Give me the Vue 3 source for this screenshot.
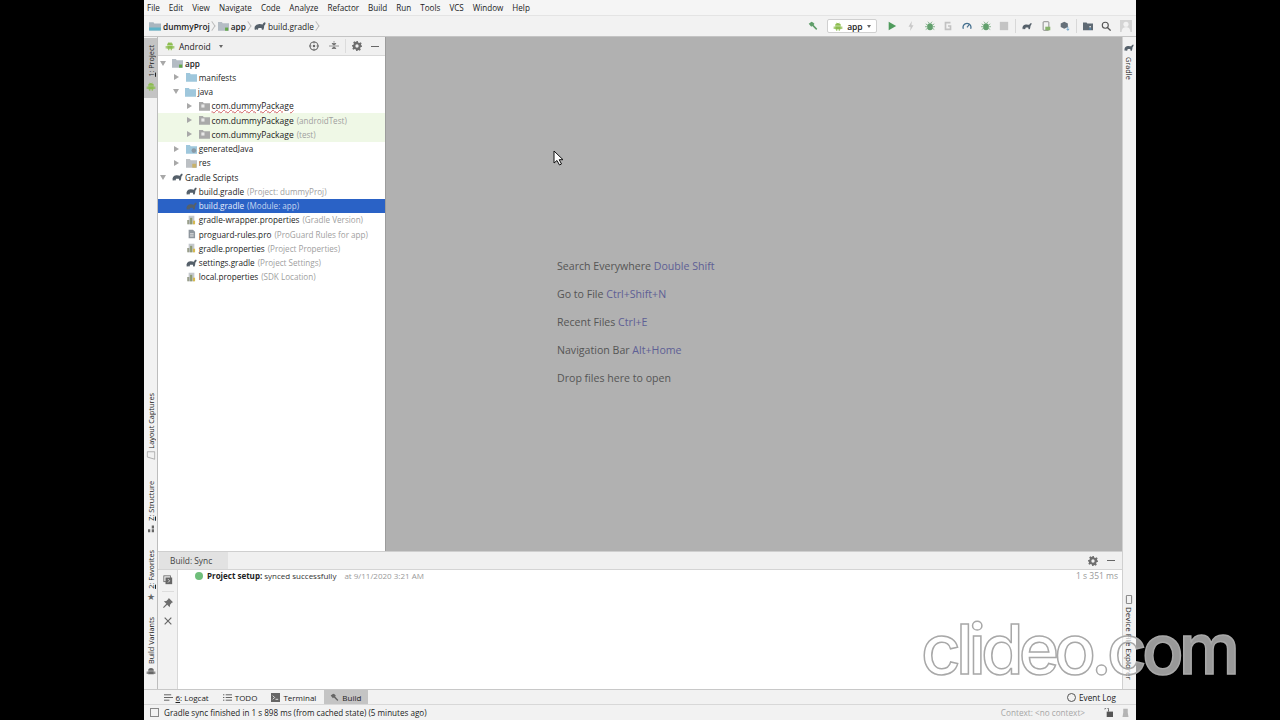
<template>
  <div class="stage">
    <svg class="sprite" width="0" height="0">
      <symbol id="folder" viewBox="0 0 14 12"><path d="M0 1h5l1 1.500h8V12H0z" fill="#9fc7dc"/></symbol>
      <symbol id="pkg" viewBox="0 0 14 12"><path d="M0 1h5l1 1.500h8V12H0z" fill="#a9a9a9"/><rect x="3" y="4" width="4" height="4" fill="#e8e8e8"/></symbol>
      <symbol id="module" viewBox="0 0 14 12"><path d="M0 1h5l1 1.500h8V12H0z" fill="#b4bcc4"/><rect x="9" y="8" width="4" height="4" fill="#62a848"/></symbol>
      <symbol id="root" viewBox="0 0 16 12"><path d="M0 1h6l1 1.500h9V12H0z" fill="#a9b6bf"/><rect x="0" y="8" width="16" height="4" fill="#5fb4c9"/></symbol>
      <symbol id="gen" viewBox="0 0 14 12"><path d="M0 1h5l1 1.500h8V12H0z" fill="#9fc7dc"/><circle cx="10" cy="8" r="3" fill="#8a9aa6"/></symbol>
      <symbol id="res" viewBox="0 0 14 12"><path d="M0 1h5l1 1.500h8V12H0z" fill="#bcc0c4"/><rect x="8" y="7" width="5" height="5" fill="#c8b26a"/></symbol>
      <symbol id="gradle" viewBox="0 0 16 12"><path d="M1 11c-1-4 1-7 5-7.500 2.500-.3 4 .3 5.500.5.500-1.500 1.500-2.500 3-3l1 1c-.5 2-1 3-2 3.500.2 2-.5 4-1 5.500h-2l-.5-2.500H6L5 11H3.500L3 9.500 2.600 11z" fill="#55606a"/></symbol>
      <symbol id="props" viewBox="0 0 14 14"><path d="M3 1h8v12H3z" fill="#c4c8cc"/><rect x="1" y="7" width="3" height="6" fill="#9a9f8c"/><rect x="5" y="4" width="3" height="9" fill="#8e9a72"/><rect x="9" y="8" width="3" height="5" fill="#d5b94e"/></symbol>
      <symbol id="pro" viewBox="0 0 14 14"><path d="M3 1h6l3 3v9H3z" fill="#8f979e"/><rect x="5" y="6" width="5" height="1.500" fill="#e4e4e4"/><rect x="5" y="9" width="5" height="1.500" fill="#e4e4e4"/></symbol>
      <symbol id="android" viewBox="0 0 14 12"><path d="M3 5a4 4 0 0 1 8 0zM3 5.800h8V10H3zM1 6h1.400v3.500H1zM11.600 6H13v3.500h-1.400zM4.500 10H6v2H4.500zM8 10h1.500v2H8zM4.500 1 5 .5 6 2l-.5.500zM9.500 1 9 .5 8 2l.5.500z" fill="#8cbd4f"/></symbol>
      <symbol id="gear" viewBox="0 0 12 12"><path d="M5 0h2l.4 1.700 1.400.6L10.200 1.400l1.400 1.400-.9 1.400.6 1.400L12 5v2l-1.700.4-.6 1.400.9 1.400-1.400 1.400-1.400-.9-1.400.6L7 12H5l-.4-1.700-1.400-.6-1.400.9L.4 9.200l.9-1.400-.6-1.400L0 7V5l1.700-.4.600-1.400-.9-1.400L2.800.4l1.400.9 1.400-.6zM6 4a2 2 0 1 0 0 4 2 2 0 0 0 0-4z" fill="#6e6e6e" fill-rule="evenodd"/></symbol>
      <symbol id="hammer" viewBox="0 0 14 14"><path d="M1 4l4-3 2 1 2 2-1 1.500L13 11l-1.500 1.500L6 7 4.500 8z" fill="currentColor"/></symbol>
      <symbol id="bug" viewBox="0 0 14 14"><ellipse cx="7" cy="8" rx="4" ry="5" fill="currentColor"/><path d="M1 4l3 2M13 4l-3 2M0 8h3M14 8h-3M1 12l3-2M13 12l-3-2M4 1l2 2M10 1L8 3" stroke="currentColor" fill="none"/></symbol>
    </svg>

    <div class="ide">
      <div class="menubar">
        <span v-for="m in menus" :key="m" class="menu-item">{{ m }}</span>
      </div>

      <div class="navbar">
        <div class="crumbs">
          <svg class="ic16"><use href="#root" /></svg><b>dummyProj</b><i class="chev"></i>
          <svg class="ic14"><use href="#module" /></svg><b>app</b><i class="chev"></i>
          <svg class="ic16"><use href="#gradle" /></svg><span>build.gradle</span><i class="chev"></i>
        </div>
        <div class="toolbar">
          <svg class="tb hammer" viewBox="0 0 14 14"><use href="#hammer" /></svg>
          <div class="run-config">
            <svg class="ic10"><use href="#android" /></svg>
            <b>app</b>
            <span class="caret"></span>
          </div>
          <svg class="tb" viewBox="0 0 12 12"><path d="M2 1l9 5-9 5z" fill="#4f9b5c"/></svg>
          <svg class="tb" viewBox="0 0 12 12"><path d="M7 0L3 7h2.500L5 12l4-7H6.500z" fill="#c8c8c8"/></svg>
          <svg class="tb bug" viewBox="0 0 14 14"><use href="#bug" /></svg>
          <svg class="tb" viewBox="0 0 12 12"><path d="M9 2H3v8h6V6H6" stroke="#c2c2c2" stroke-width="2" fill="none"/></svg>
          <svg class="tb" viewBox="0 0 14 14"><path d="M2 11a5.500 5.500 0 1 1 10 0" stroke="#45708f" stroke-width="1.800" fill="none"/><path d="M7 9l3-4" stroke="#45708f" stroke-width="1.500"/></svg>
          <svg class="tb bug" viewBox="0 0 14 14"><use href="#bug" /></svg>
          <svg class="tb" viewBox="0 0 12 12"><rect x="1" y="1" width="10" height="10" fill="#c4c4c4"/></svg>
          <i class="tb-sep"></i>
          <svg class="tb" viewBox="0 0 16 12"><use href="#gradle" /></svg>
          <svg class="tb" viewBox="0 0 14 14"><rect x="3" y="1" width="8" height="12" rx="1" stroke="#666" fill="none"/><rect x="6" y="8" width="7" height="5" fill="#86b36a"/></svg>
          <svg class="tb" viewBox="0 0 14 14"><path d="M6 1l5 2.500v5L6 11 1 8.500v-5z" fill="#66707a"/><path d="M11 8v5M9 11l2 2 2-2" stroke="#4a8fc0" fill="none"/></svg>
          <i class="tb-sep"></i>
          <svg class="tb" viewBox="0 0 14 12"><path d="M0 1h5l1 1.500h8V12H0z" fill="#5f6a74"/><rect x="9" y="6" width="2" height="2" fill="#e8e8e8"/><rect x="9" y="9" width="2" height="2" fill="#4a8fc0"/></svg>
          <svg class="tb" viewBox="0 0 14 14"><circle cx="6" cy="6" r="4.200" stroke="#555" stroke-width="1.600" fill="none"/><path d="M9 9l4.500 4.500" stroke="#555" stroke-width="1.800"/></svg>
          <svg class="tb user" viewBox="0 0 14 14"><rect width="14" height="14" fill="#d4d4d4"/><circle cx="7" cy="5" r="3" fill="#f2f2f2"/><path d="M2 14c0-4 2-5.500 5-5.500s5 1.500 5 5.500z" fill="#f2f2f2"/></svg>
        </div>
      </div>

      <div class="body">
        <div class="strip left">
          <div class="side-tab active">
            <span class="vtext"><u>1</u>: Project</span>
            <svg class="ic10"><use href="#android" /></svg>
          </div>
          <div class="side-tab captures">
            <span class="vtext">Layout Captures</span>
            <svg class="ic10 turn" viewBox="0 0 12 12"><path d="M1 11L4 1h7v10z" fill="none" stroke="#999"/></svg>
          </div>
          <div class="side-tab structure">
            <span class="vtext"><u>Z</u>: Structure</span>
            <svg class="ic10 turn" viewBox="0 0 12 12"><path d="M1 2h4v3H1zM6 7h4v3H6zM1 7h4v3H1z" fill="#666"/></svg>
          </div>
          <div class="side-tab favorites">
            <span class="vtext"><u>2</u>: Favorites</span>
            <span class="star">★</span>
          </div>
          <div class="side-tab variants">
            <span class="vtext">Build Variants</span>
            <svg class="ic10" viewBox="0 0 14 12"><path d="M3 5a4 4 0 0 1 8 0zM3 5.800h8V10H3zM1 6h1.400v3.500H1zM11.600 6H13v3.500h-1.400z" fill="#666"/></svg>
          </div>
        </div>

        <div class="center">
          <div class="upper">
            <div class="project">
              <div class="project-head">
                <svg class="android-big"><use href="#android" /></svg>
                <span class="head-title">Android</span>
                <span class="caret"></span>
                <span class="head-tools">
                  <svg class="ic11" viewBox="0 0 12 12"><circle cx="6" cy="6" r="4.800" stroke="#666" stroke-width="1.300" fill="none"/><circle cx="6" cy="6" r="1.500" fill="#666"/><path d="M6 0v3M6 9v3M0 6h3M9 6h3" stroke="#666"/></svg>
                  <svg class="ic11" viewBox="0 0 12 12"><path d="M0 6h12M6 0v2M3.500 3h5L6 5zM3.500 9h5L6 7z" stroke="#666" fill="#666" stroke-width=".8"/></svg>
                  <i class="head-sep"></i>
                  <svg class="ic11"><use href="#gear" /></svg>
                  <i class="dash"></i>
                </span>
              </div>
              <div class="tree">
                <div
                  v-for="row in tree"
                  :key="row.id"
                  class="row"
                  :class="{ selected: row.selected, tested: row.tested, pkg: row.depth === 2 }"
                  :style="{ paddingLeft: 2 + row.depth * 12.75 + 'px' }"
                >
                  <span class="arrow" :class="row.arrow"></span>
                  <svg class="row-icon"><use :href="'#' + row.icon" /></svg>
                  <span class="label" :class="{ wavy: row.wavy, bold: row.bold }">{{ row.name }}</span>
                  <span v-if="row.note" class="note">{{ row.note }}</span>
                </div>
              </div>
            </div>

            <div class="editor">
              <p v-for="h in hints" :key="h.text">{{ h.text }} <span>{{ h.keys }}</span></p>
            </div>
          </div>

          <div class="build">
            <div class="build-head">
              <span class="build-tab">Build: Sync</span>
              <span class="head-tools">
                <svg class="ic11"><use href="#gear" /></svg>
                <i class="dash"></i>
              </span>
            </div>
            <div class="build-body">
              <div class="build-tools">
                <svg class="ic11" viewBox="0 0 12 12"><rect x="1" y="1" width="8" height="7" fill="none" stroke="#666"/><rect x="3" y="3" width="8" height="8" fill="#666"/><path d="M6 5l2 2-2 2" stroke="#eee" fill="none"/></svg>
                <i class="tools-sep"></i>
                <svg class="ic11" viewBox="0 0 12 12"><path d="M7 0l5 5-1.500.8L8.500 8 8 11 5 8 1 12 0 11l4-4-3-3 3-.5 2.200-2z" fill="#6e6e6e"/></svg>
                <svg class="ic11" viewBox="0 0 12 12"><path d="M2 2l8 8M10 2l-8 8" stroke="#666" stroke-width="1.400"/></svg>
              </div>
              <div class="build-output">
                <span class="ok-dot"></span>
                <b>Project setup:</b>
                <span class="sync-msg">synced successfully</span>
                <span class="sync-time">at 9/11/2020 3:21 AM</span>
                <span class="duration">1 s 351 ms</span>
              </div>
            </div>
          </div>
        </div>

        <div class="strip right">
          <div class="side-tab gradle-tab">
            <svg class="ic12"><use href="#gradle" /></svg>
            <span class="vtext down">Gradle</span>
          </div>
          <div class="side-tab device-tab">
            <svg class="ic10" viewBox="0 0 10 12"><rect x="1.500" y="0.500" width="7" height="11" rx="1" fill="none" stroke="#555"/></svg>
            <span class="vtext down">Device File Explorer</span>
          </div>
        </div>
      </div>

      <div class="bottom-tabs">
        <div class="tabs-left">
          <span class="btab"><svg class="ic9" viewBox="0 0 10 10"><path d="M0 2h8M0 5h10M0 8h6" stroke="#555"/></svg><span><u>6</u>: Logcat</span></span>
          <span class="btab"><svg class="ic9" viewBox="0 0 10 10"><path d="M3 2h7M3 5h7M3 8h7M0 2h1.500M0 5h1.500M0 8h1.500" stroke="#555"/></svg>TODO</span>
          <span class="btab"><svg class="ic9" viewBox="0 0 10 10"><rect width="10" height="10" fill="#666"/><path d="M2 3l2 2-2 2M5 7h3" stroke="#eee" fill="none"/></svg>Terminal</span>
          <span class="btab active"><svg class="ic9 gray-hammer" viewBox="0 0 14 14"><use href="#hammer" /></svg>Build</span>
        </div>
        <span class="btab event"><i class="event-ic"></i>Event Log</span>
      </div>

      <div class="statusbar">
        <span class="status-box"></span>
        <span class="status-msg">Gradle sync finished in 1 s 898 ms (from cached state) (5 minutes ago)</span>
        <span class="status-ctx">Context: &lt;no context&gt;</span>
        <svg class="ic9 lock" viewBox="0 0 10 10"><path d="M1 1.500a2 2 0 0 1 4 0V4" stroke="#555" fill="none"/><rect x="3" y="4" width="7" height="6" fill="#555"/></svg>
        <svg class="ic9 hector" viewBox="0 0 10 12"><path d="M2 1h6v5l1 6H1l1-6z" fill="#b4b4b4"/></svg>
      </div>
    </div>

    <svg class="cursor" width="12" height="16" viewBox="0 0 12 16"><path d="M1 1v12l3-2.500L6.500 15l2-1-2.300-4.300H10z" fill="#fff" stroke="#111"/></svg>
    <div class="watermark">clideo.com</div>
  </div>
</template>

<script setup>
const menus = ['File', 'Edit', 'View', 'Navigate', 'Code', 'Analyze', 'Refactor', 'Build', 'Run', 'Tools', 'VCS', 'Window', 'Help']

const tree = [
  { id: 1, depth: 0, arrow: 'open', icon: 'module', name: 'app', bold: true },
  { id: 2, depth: 1, arrow: 'closed', icon: 'folder', name: 'manifests' },
  { id: 3, depth: 1, arrow: 'open', icon: 'folder', name: 'java' },
  { id: 4, depth: 2, arrow: 'closed', icon: 'pkg', name: 'com.dummyPackage', wavy: true },
  { id: 5, depth: 2, arrow: 'closed', icon: 'pkg', name: 'com.dummyPackage', note: '(androidTest)', tested: true },
  { id: 6, depth: 2, arrow: 'closed', icon: 'pkg', name: 'com.dummyPackage', note: '(test)', tested: true },
  { id: 7, depth: 1, arrow: 'closed', icon: 'gen', name: 'generatedJava' },
  { id: 8, depth: 1, arrow: 'closed', icon: 'res', name: 'res' },
  { id: 9, depth: 0, arrow: 'open', icon: 'gradle', name: 'Gradle Scripts' },
  { id: 10, depth: 1, icon: 'gradle', name: 'build.gradle', note: '(Project: dummyProj)' },
  { id: 11, depth: 1, icon: 'gradle', name: 'build.gradle', note: '(Module: app)', selected: true },
  { id: 12, depth: 1, icon: 'props', name: 'gradle-wrapper.properties', note: '(Gradle Version)' },
  { id: 13, depth: 1, icon: 'pro', name: 'proguard-rules.pro', note: '(ProGuard Rules for app)' },
  { id: 14, depth: 1, icon: 'props', name: 'gradle.properties', note: '(Project Properties)' },
  { id: 15, depth: 1, icon: 'gradle', name: 'settings.gradle', note: '(Project Settings)' },
  { id: 16, depth: 1, icon: 'props', name: 'local.properties', note: '(SDK Location)' }
]

const hints = [
  { text: 'Search Everywhere', keys: 'Double Shift' },
  { text: 'Go to File', keys: 'Ctrl+Shift+N' },
  { text: 'Recent Files', keys: 'Ctrl+E' },
  { text: 'Navigation Bar', keys: 'Alt+Home' },
  { text: 'Drop files here to open', keys: '' }
]
</script>

<style>
html, body { margin: 0; background: #000; }
</style>

<style scoped>
.stage {
  position: relative;
  width: 1280px;
  height: 720px;
  overflow: hidden;
  background: #000;
  font-family: "Open Sans", "Noto Sans", sans-serif;
  font-size: 8.200px;
  color: #222;
}

.sprite { position: absolute; }

.ide {
  width: 992px;
  height: 720px;
  margin-left: 144px;
  display: flex;
  flex-direction: column;
  background: #f2f2f2;
}

.menubar {
  height: 15px;
  display: flex;
  align-items: center;
  padding-left: 3px;
  gap: 9px;
  background: #f5f5f5;
  font-size: 8.100px;
  flex: none;
}

.navbar {
  height: 22px;
  flex: none;
  display: flex;
  align-items: center;
  justify-content: space-between;
  background: #f2f2f2;
  border-top: 1px solid #e4e4e4;
  border-bottom: 1px solid #c4c4c4;
  box-sizing: border-box;
  padding-left: 5px;
}

.crumbs { display: flex; align-items: center; gap: 2px; font-size: 8.300px; }
.crumbs b { font-weight: 600; }
.chev {
  width: 5px;
  height: 5px;
  margin: 0 1px 0 -3px;
  border-top: 1px solid #b8b8b8;
  border-right: 1px solid #b8b8b8;
  transform: rotate(45deg) skew(10deg, 10deg);
}

.ic16 { width: 12px; height: 10px; }
.ic14 { width: 11px; height: 10px; }
.ic12 { width: 10px; height: 9px; }
.ic11 { width: 10px; height: 10px; }
.ic10 { width: 10px; height: 9px; }
.ic9 { width: 9px; height: 9px; flex: none; }

.toolbar { display: flex; align-items: center; gap: 8.700px; padding-right: 4px; }
.tb { width: 10px; height: 10px; }
.hammer { color: #5f9e6a; }
.bug { color: #62a06d; }
.user { width: 12px; height: 12px; }
.tb-sep { width: 1px; height: 14px; background: #d8d8d8; margin: 0 -2.700px; }

.run-config {
  width: 50px;
  height: 14px;
  display: flex;
  align-items: center;
  gap: 4px;
  padding: 0 5px;
  box-sizing: border-box;
  margin-right: 1.300px;
  background: #fff;
  border: 1px solid #d0d0d0;
  border-radius: 2px;
  font-size: 8.500px;
}
.run-config b { font-weight: 600; flex: 1; }

.caret {
  width: 0;
  height: 0;
  border-left: 2.500px solid transparent;
  border-right: 2.500px solid transparent;
  border-top: 3px solid #666;
}

.body { flex: 1; min-height: 0; display: flex; }

.strip {
  width: 14px;
  flex: none;
  display: flex;
  flex-direction: column;
  align-items: center;
  box-sizing: border-box;
  background: #f2f2f2;
}
.strip.left { border-right: 1px solid #bdbdbd; }
.strip.right { border-left: 1px solid #d0d0d0; padding-right: 2px; }

.side-tab { display: flex; flex-direction: column; align-items: center; gap: 3px; width: 100%; }
.side-tab.active { background: #c4c4c4; padding: 7px 0 7px; margin-top: 1px; gap: 5px; }
.captures { margin-top: 295px; }
.structure { margin-top: 21px; }
.favorites { margin-top: 17px; }
.variants { margin-top: 15px; }
.gradle-tab { margin-top: 6px; gap: 5px; }
.device-tab { margin-top: 515px; }

.vtext {
  writing-mode: vertical-rl;
  transform: rotate(180deg);
  font-size: 7.300px;
  line-height: 12px;
  white-space: nowrap;
}
.vtext.down { transform: none; }
.device-tab .vtext { font-size: 8px; }
.star { font-size: 9px; line-height: 10px; color: #666; }
.turn { transform: rotate(-90deg); }

.center { flex: 1; min-width: 0; display: flex; flex-direction: column; }
.upper { height: 514px; flex: none; display: flex; }

.project {
  width: 228px;
  flex: none;
  background: #fff;
  border-right: 1px solid #9c9c9c;
  box-sizing: border-box;
}

.project-head {
  height: 18px;
  display: flex;
  align-items: center;
  gap: 4px;
  padding-left: 7px;
  background: #f0f0f0;
  border-bottom: 1px solid #d8d8d8;
  font-size: 8.500px;
}
.project-head .caret { margin-left: 4px; }
.android-big { width: 10px; height: 10px; }

.head-tools {
  margin-left: auto;
  display: flex;
  align-items: center;
  gap: 9.500px;
  padding-right: 6px;
}
.head-sep { width: 1px; height: 14px; background: #dcdcdc; margin: 0 -3.500px; }
.dash { width: 8px; height: 1px; background: #666; }
.build-head .head-tools { padding-right: 7px; }

.row {
  height: 14.250px;
  display: flex;
  align-items: center;
  white-space: nowrap;
  color: #1c1c1c;
}
.row.tested { background: #eff8e6; }
.row.selected { background: #2a62c6; color: #e6eefc; }
.row.selected .note { color: #c6d5f0; }

.arrow { width: 7px; height: 7px; margin-right: 6px; flex: none; }
.arrow.closed {
  width: 0;
  height: 0;
  margin-right: 7px;
  margin-left: 1px;
  border-top: 3.500px solid transparent;
  border-bottom: 3.500px solid transparent;
  border-left: 5px solid #a8a8a8;
}
.arrow.open {
  width: 0;
  height: 0;
  margin-right: 6px;
  border-left: 3.500px solid transparent;
  border-right: 3.500px solid transparent;
  border-top: 5px solid #a8a8a8;
}

.row-icon { width: 11px; height: 10px; margin-right: 2px; flex: none; }
.label { font-size: 8.200px; }
.row.pkg .label { font-size: 8.500px; }
.label.bold { font-weight: 600; }
.label.wavy { text-decoration: underline wavy #cf6060 1px; text-underline-offset: 0; }
.note { margin-left: 3px; font-size: 8.100px; color: #a0a0a0; }

.editor {
  flex: 1;
  background: #b1b1b1;
  padding: 222px 0 0 171px;
  font-size: 10.600px;
  color: #555;
}
.editor p { margin: 0 0 14px; line-height: 14px; white-space: nowrap; }
.editor span { color: #5e6095; }

.build { flex: 1; min-height: 0; display: flex; flex-direction: column; background: #fff; border-top: 1px solid #cfcfcf; }

.build-head {
  height: 17px;
  flex: none;
  display: flex;
  align-items: center;
  background: #f0f0f0;
  border-bottom: 1px solid #d4d4d4;
}
.build-tab {
  height: 100%;
  width: 58px;
  margin-left: 1px;
  padding-left: 11px;
  display: flex;
  align-items: center;
  background: #e2e2e2;
  font-size: 8.400px;
  color: #444;
}

.build-body { flex: 1; display: flex; min-height: 0; }
.build-tools {
  width: 20px;
  flex: none;
  display: flex;
  flex-direction: column;
  align-items: center;
  padding-top: 5px;
  gap: 8px;
  background: #f2f2f2;
  border-right: 1px solid #d8d8d8;
  box-sizing: border-box;
}
.tools-sep { width: 12px; height: 1px; background: #ddd; margin: -2px 0; }

.build-output {
  flex: 1;
  display: flex;
  align-items: flex-start;
  height: 12px;
  padding: 0 4px 0 17px;
  font-size: 8px;
  line-height: 12px;
  color: #333;
}
.build-output b { font-weight: 700; margin-right: 2px; color: #222; }
.ok-dot {
  width: 8px;
  height: 8px;
  margin: 2px 4px 0 0;
  border-radius: 50%;
  background: #6fbe7a;
  flex: none;
}
.sync-time { margin-left: 8px; color: #999; }
.duration { margin-left: auto; color: #999; font-size: 8.500px; }

.bottom-tabs {
  height: 16px;
  flex: none;
  display: flex;
  align-items: center;
  justify-content: space-between;
  padding: 0 20px 0 13px;
  background: #f2f2f2;
  border-top: 1px solid #c8c8c8;
  border-bottom: 1px solid #d8d8d8;
  box-sizing: border-box;
}
.tabs-left { display: flex; height: 100%; align-items: center; gap: 1px; }
.btab {
  display: flex;
  align-items: center;
  gap: 3px;
  height: 100%;
  padding: 0 6.500px;
  font-size: 8px;
  white-space: nowrap;
}
.btab.active { background: #c4c4c4; }
.gray-hammer { color: #666; }
.event { padding: 0; font-size: 8.200px; }
.event-ic {
  width: 9px;
  height: 9px;
  border: 1px solid #555;
  border-radius: 50%;
  box-sizing: border-box;
}

.statusbar {
  height: 15px;
  flex: none;
  display: flex;
  align-items: center;
  padding: 0 6px;
  font-size: 8.100px;
  background: #f2f2f2;
}
.status-box {
  width: 7px;
  height: 7px;
  margin-right: 5px;
  border: 1px solid #888;
}
.status-ctx { margin-left: auto; color: #a6a6a6; margin-right: 19px; font-size: 8.200px; }
.hector { margin-left: 8px; }

/* over everything: the pointer and the video watermark */
.cursor { position: absolute; left: 553px; top: 150px; }
.watermark {
  position: absolute;
  left: 921px;
  top: 604px;
  font-family: "Inter", sans-serif;
  font-size: 69px;
  line-height: 90px;
  font-weight: 500;
  letter-spacing: -4.900px;
  color: rgba(255, 255, 255, 0.6);
  -webkit-text-stroke: 1.500px #a8a8a8;
  white-space: nowrap;
}
</style>
